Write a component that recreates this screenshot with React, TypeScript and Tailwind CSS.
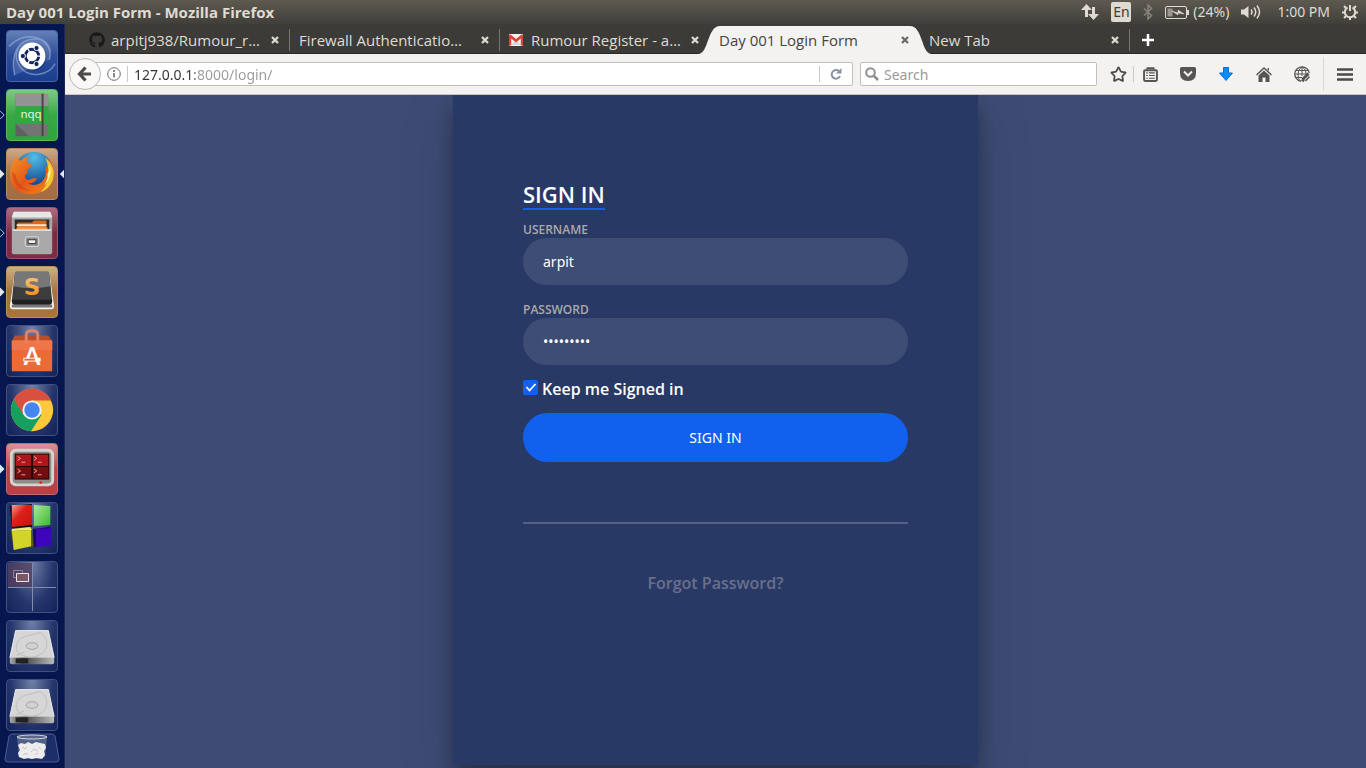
import type { ReactNode } from 'react'
import { FaGithub } from 'react-icons/fa'
import { Star } from 'lucide-react'

type Tab = {
  title: string
  icon?: ReactNode
  active?: boolean
  divider?: boolean
}

const tabs: Tab[] = [
  { title: 'arpitj938/Rumour_r…', icon: <FaGithub className="size-4 text-[#1b1a18]" />, divider: true },
  { title: 'Firewall Authenticatio…', divider: true },
  { title: 'Rumour Register - a…', icon: <GmailIcon /> },
  { title: 'Day 001 Login Form', active: true },
  { title: 'New Tab', divider: true },
]

type LauncherItem = {
  name: string
  tile: string
  icon: ReactNode
  left?: 'hollow' | 'solid'
  focused?: boolean
}

const glass = 'bg-radial-[at_50%_0%] from-[#7280a8] via-[#24366c] via-60% to-[#122358] border-[#40517f]'

const launcher: LauncherItem[] = [
  { name: 'Dash', tile: 'bg-linear-to-b from-[#6480b8] via-[#2c4d99] to-[#1b3f90] border-[#4a66a6]', icon: <DashIcon /> },
  { name: 'Notepadqq', tile: 'bg-linear-to-b from-[#7fc884] via-[#36a944] to-[#2fa53d] border-[#5cb865]', icon: <NotepadIcon />, left: 'hollow' },
  { name: 'Firefox', tile: 'bg-linear-to-b from-[#cfa888] via-[#a8734a] to-[#a56c42] border-[#b98a66]', icon: <FirefoxIcon />, left: 'solid', focused: true },
  { name: 'Files', tile: 'bg-linear-to-b from-[#ac6c80] via-[#7d2b43] to-[#7f2c42] border-[#9c5268]', icon: <FilesIcon />, left: 'hollow' },
  { name: 'Sublime Text', tile: 'bg-linear-to-b from-[#d0ae86] via-[#a3733c] to-[#a8753a] border-[#bb9160]', icon: <SublimeIcon />, left: 'solid' },
  { name: 'Software', tile: glass, icon: <SoftwareIcon /> },
  { name: 'Chrome', tile: glass, icon: <ChromeIcon /> },
  { name: 'Terminator', tile: 'bg-linear-to-b from-[#d99396] via-[#b94347] to-[#b84044] border-[#c66a6e]', icon: <TerminatorIcon />, left: 'solid' },
  { name: 'Code Blocks', tile: glass, icon: <BlocksIcon /> },
  { name: 'Workspaces', tile: glass, icon: <WorkspacesIcon /> },
  { name: 'Disk 1', tile: glass, icon: <DiskIcon /> },
  { name: 'Disk 2', tile: glass, icon: <DiskIcon /> },
]

function GmailIcon() {
  return (
    <svg viewBox="0 0 14 12" className="w-[14px] h-3">
      <rect width="14" height="12" rx="1" fill="#f2f2f2" />
      <path d="M2 11 7 6l5 5z" fill="#d8d8d8" />
      <path d="M0 1v10.500h2.200V4.500L7 8.500l4.800-4v7H14V1L12.500.500 7 5 1.500.500z" fill="#dc4437" />
    </svg>
  )
}

function DashIcon() {
  return (
    <svg viewBox="0 0 52 52" className="size-[50px]">
      <g fill="none" stroke="#a9badd" strokeWidth="1.500" opacity=".55">
        <path d="M8 46C3 24 12 8 30 8c12 0 17 10 14 22" />
        <path d="M2 16C18 0 40 4 45 22" />
        <path d="M50 34C44 46 24 50 14 38 8 30 9 22 12 17" />
      </g>
      <path d="M8 46C3 24 12 8 30 8c12 0 17 10 14 22z" fill="#9eb2dc" opacity=".25" />
      <circle cx="27" cy="27" r="14" fill="#0e225c" opacity=".4" />
      <circle cx="26" cy="26" r="14" fill="#fff" />
      <circle cx="26" cy="26" r="7" fill="none" stroke="#12265f" strokeWidth="3" />
      <g stroke="#fff" strokeWidth="1.300">
        <path d="M31 26h6M23.500 21.700l-3-5.200M23.500 30.300l-3 5.200" />
      </g>
      <g fill="#12265f" stroke="#fff" strokeWidth="1">
        <circle cx="16.500" cy="26" r="2.700" />
        <circle cx="30.700" cy="17.700" r="2.700" />
        <circle cx="30.700" cy="34.300" r="2.700" />
      </g>
    </svg>
  )
}

function NotepadIcon() {
  return (
    <svg viewBox="0 0 52 52" className="size-[50px]">
      <path d="M9 4h30q4 0 4 4v36q0 4-4 4H9z" fill="#747474" />
      <path d="M9 4h30q4 0 4 4v9H9z" fill="#939393" />
      <path d="m9 35 14 13H9z" fill="#5f5f5f" />
      <path d="M9 17h34v18H9z" fill="#2eaa3e" />
      <path d="M36 4h2v44h-2z" fill="#464646" />
      <text x="25" y="29" textAnchor="middle" fontSize="12" fontFamily="Noto Sans, sans-serif" fill="#e4f3e6">nqq</text>
    </svg>
  )
}

function FirefoxIcon() {
  return (
    <svg viewBox="0 0 52 52" className="size-[50px]">
      <defs>
        <radialGradient id="ff-globe" cx=".5" cy=".15" r=".75">
          <stop offset="0" stopColor="#52bde8" />
          <stop offset="1" stopColor="#123f87" />
        </radialGradient>
        <linearGradient id="ff-fox" x1="0" y1="0" x2="1" y2="1">
          <stop offset="0" stopColor="#f59324" />
          <stop offset=".5" stopColor="#e4571b" />
          <stop offset="1" stopColor="#f08a1d" />
        </linearGradient>
      </defs>
      <circle cx="28" cy="23" r="20" fill="url(#ff-globe)" />
      <path d="M7 13c0-2 1-4 3-5 1 3 3 4 5 4 2-3 5-4 8-4-2 3-3 4-2 6 2 1 4 1 5 3-1 3-4 3-5 5 1 2 0 4-2 5-1 3 1 5 4 5 3-1 5-3 8-1-2 4-6 5-9 5 6 3 13 1 16-4 2-3 3-7 2-12 3-4 4-6 3-10 4 5 6 10 5 16-2 13-11 21-23 21C12 47 3 39 3 28c0-6 1-10 4-15z" fill="url(#ff-fox)" />
      <path d="M40 9c7 6 10 13 8 22-2 7-7 12-13 14 4-5 7-8 7-13 2-3 2-6 1-9 0-4-1-9-3-14z" fill="#f6c52c" />
      <path d="M44 16c3 7 1 15-5 22 2-5 4-8 3-12 2-3 2-6 2-10z" fill="#fdf3a0" />
      <path d="M5 23c0 13 8 20 20 21-8-3-15-8-16-17z" fill="#c93b16" opacity=".5" />
    </svg>
  )
}

function FilesIcon() {
  return (
    <svg viewBox="0 0 52 52" className="size-[50px]">
      <path d="M7 4h38l2 4v38q0 2-2 2H7q-2 0-2-2V8z" fill="#a8a8a8" />
      <path d="M7 4h38l2 6H5z" fill="#e7e7e7" />
      <path d="M8 12h36v12H8z" fill="#2b2b2b" />
      <path d="M11 15h15l2-2h13v9H11z" fill="#d8691f" />
      <path d="M10 17h31v2H10z" fill="#f7e8d5" />
      <path d="M10 20h32v3H10z" fill="#f09a4c" />
      <path d="M6 22h40l-1 24H8z" fill="#a9a9a9" />
      <path d="M6 22h40v2H6z" fill="#ddd" />
      <rect x="19" y="30" width="14" height="10" rx="2" fill="#8f8f8f" stroke="#e4e4e4" />
      <rect x="22" y="33" width="8" height="4" fill="#eee" stroke="#333" />
    </svg>
  )
}

function SublimeIcon() {
  return (
    <svg viewBox="0 0 52 52" className="size-[50px]">
      <defs>
        <linearGradient id="sublime-s" x1="0" y1="0" x2="0" y2="1">
          <stop offset="0" stopColor="#f7c987" />
          <stop offset="1" stopColor="#f5860f" />
        </linearGradient>
      </defs>
      <path d="m8 6-5 34q0 4 3 4h40q3 0 3-4L44 6z" fill="#f1f1f1" />
      <path d="M5 39h42v3H5z" fill="#777" />
      <path d="M10 5h32q2 0 2 2l3 28q0 4-3 4H8q-3 0-3-4L8 7q0-2 2-2z" fill="#3c3c3c" />
      <path d="M10 5h32q2 0 2 2l1 13Q24 24 7 20L8 7q0-2 2-2z" fill="#777" />
      <path d="M5 34h42q0 5-3 5H8q-3 0-3-5z" fill="#202020" />
      <text x="26" y="29" textAnchor="middle" fontSize="24" fontWeight="700" fontFamily="DejaVu Sans, sans-serif" fill="url(#sublime-s)">S</text>
    </svg>
  )
}

function SoftwareIcon() {
  return (
    <svg viewBox="0 0 52 52" className="size-[50px]">
      <path d="M5 16 8 10h35l4 6z" fill="#b84f2a" />
      <path d="M5 15h42v32H5z" fill="#ec6a36" />
      <path d="M5 15h42v10H5z" fill="#f0764a" />
      <path d="M20 18V9q0-4 6-4t6 4v9" fill="none" stroke="#e08367" strokeWidth="3" />
      <text x="26" y="41" textAnchor="middle" fontSize="25" fontWeight="700" fontFamily="Lato, sans-serif" fill="#fff">A</text>
      <rect x="17" y="33" width="18" height="4" fill="#fff" />
      <rect x="18" y="34" width="11" height="2" fill="#ec6a36" />
    </svg>
  )
}

function ChromeIcon() {
  return (
    <svg viewBox="0 0 52 52" className="size-[50px]">
      <circle cx="26" cy="26" r="22" fill="#fdc93b" />
      <path d="M26 26 7 15a22 22 0 0 0 18 33l11-17z" fill="#16a05d" />
      <path d="M26 16h20A22 22 0 0 0 7 15l10 16z" fill="#d95040" />
      <circle cx="26" cy="26" r="10" fill="#f4f4f4" />
      <circle cx="26" cy="26" r="8" fill="#4585ee" />
    </svg>
  )
}

function TerminatorIcon() {
  return (
    <svg viewBox="0 0 52 52" className="size-[50px]">
      <rect x="3" y="5" width="46" height="39" rx="6" fill="#d4d2cf" />
      <rect x="6" y="8" width="40" height="33" rx="4" fill="#8f8c87" />
      <rect x="8" y="10" width="36" height="27" fill="#230506" />
      <path d="M9 11h16v12H9zM27 11h16v12H27z" fill="#b0171a" />
      <path d="M9 24h16v12H9zM27 24h16v12H27z" fill="#720e10" />
      <path d="m11 13 3 2-3 2m4 2h4m9-6 3 2-3 2m4 2h4M11 26l3 2-3 2m4 2h4m9-6 3 2-3 2m4 2h4" fill="none" stroke="#f0a3a3" />
      <circle cx="35" cy="40" r="1.500" fill="#e42a20" />
    </svg>
  )
}

function BlocksIcon() {
  return (
    <svg viewBox="0 0 52 52" className="size-[50px]">
      <defs>
        <linearGradient id="block-red" x1="0" y1="0" x2="1" y2="1">
          <stop offset="0" stopColor="#f2a19c" />
          <stop offset=".4" stopColor="#dd2118" />
          <stop offset="1" stopColor="#c3140d" />
        </linearGradient>
        <linearGradient id="block-green" x1="0" y1="0" x2="1" y2="1">
          <stop offset="0" stopColor="#a5ec95" />
          <stop offset="1" stopColor="#3fb62b" />
        </linearGradient>
      </defs>
      <path d="M3 3 26 1v24L5 26z" fill="#140c10" />
      <path d="M5 2h21v21l-21 2z" fill="url(#block-red)" />
      <path d="m28 2 17 1v20l-17 1z" fill="url(#block-green)" />
      <path d="m4 27 3 22 21-4-3-19z" fill="#5b5a0d" />
      <path d="m5 29 20-1v17L7 49z" fill="#d3d42a" />
      <path d="M5 29v-2l19-2 2 3z" fill="#ecec70" />
      <path d="m27 27 18-2v18l-17 3z" fill="#1c0756" />
      <path d="m30 27 16-1v18l-16 2z" fill="#3d05bd" />
    </svg>
  )
}

function WorkspacesIcon() {
  return (
    <svg viewBox="0 0 50 50" className="size-[50px]">
      <path d="M1 1h25v24H1z" fill="#54405f" opacity=".8" />
      <path d="M25.500 1v48M1 25.500h48" stroke="#7f8cae" />
      <path d="M6.500 8.500h9v7h-9z" fill="none" stroke="#8d8495" />
      <path d="M9.500 11.500h12v8h-12z" fill="#7b5765" stroke="#e8e4e7" />
    </svg>
  )
}

function DiskIcon() {
  return (
    <svg viewBox="0 0 52 52" className="size-[50px]">
      <defs>
        <linearGradient id="disk-edge" x1="0" x2="1">
          <stop offset="0" stopColor="#aaa" />
          <stop offset=".3" stopColor="#444" />
          <stop offset="1" stopColor="#bbb" />
        </linearGradient>
      </defs>
      <path d="M9 10h34l6 28H3z" fill="#d6d6d6" stroke="#efefef" />
      <path d="M3 38h46v5q0 2-2 2H5q-2 0-2-2z" fill="url(#disk-edge)" />
      <path d="M9 39h13v5H9z" fill="#222" />
      <path d="M13 34C5 27 12 16 23 15l11-3c7 3 10 14 5 19-4 7-18 9-26 3z" fill="none" stroke="#bcbcbc" />
      <ellipse cx="26" cy="26" rx="6" ry="3.500" fill="#d2d2d2" stroke="#a0a0a0" />
      <path d="m10 36 8-4" stroke="#bbb" />
    </svg>
  )
}

function TrashIcon() {
  return (
    <svg viewBox="0 0 56 30" className="w-14 h-[30px]">
      <path d="M8 1h40q2 0 3 2l4 23q0 3-3 3H4q-3 0-3-3L5 3q1-2 3-2z" fill="#1c2f69" stroke="#4c5d8c" />
      <path d="m13 4 2 20q13 4 26 0l2-20z" fill="#77849f" opacity=".6" />
      <path d="m14 12 3-2 4 1 3-2 4 2 4-2 4 1 5 1 1 4-2 3 1 4-3 4-6-1-4 1-4-1-4 1-5-2-1-4 2-3z" fill="#ececec" />
      <path d="m18 14 3 2 2-2m4 5 3-3 4 2m-15 4 3-2 2 2m7 0 3-2m1-6 2 2" fill="none" stroke="#c1c4c9" />
      <ellipse cx="28" cy="4" rx="15" ry="2" fill="#5d6887" stroke="#d3d6dc" />
    </svg>
  )
}

function Launcher() {
  return (
    <nav aria-label="Launcher" className="w-[65px] shrink-0 flex flex-col items-center gap-[7px] pt-1.5 bg-[#06174f] border-r border-[#1b2a59]">
      {launcher.map((item) => (
        <div key={item.name} className="relative w-full flex justify-center">
          {item.left && (
            <svg viewBox="0 0 6 12" className="absolute left-0 top-5 w-[5px] h-3">
              <path
                d={item.left === 'solid' ? 'm0 1 5 5-5 5z' : 'm0 1 5 5-5 5'}
                fill={item.left === 'solid' ? '#e3e5ea' : 'none'}
                stroke="#e3e5ea"
              />
            </svg>
          )}
          <button
            type="button"
            aria-label={item.name}
            className={`size-[52px] rounded-[4px] border flex items-center justify-center overflow-hidden ${item.tile}`}
          >
            {item.icon}
          </button>
          {item.focused && (
            <svg viewBox="0 0 6 12" className="absolute right-0 top-5 w-[5px] h-3">
              <path d="M6 1 1 6l5 5z" fill="#e3e5ea" />
            </svg>
          )}
        </div>
      ))}
      <button type="button" aria-label="Trash" className="-mt-[5px]">
        <TrashIcon />
      </button>
    </nav>
  )
}

function SystemBar() {
  return (
    <header className="h-6 flex items-center justify-between pl-1.5 pr-2 bg-linear-to-b from-[#5d5a50] to-[#403f3a] text-[#dfdbd2]">
      <h1 className="text-[15px] leading-6 font-bold font-['Open_Sans',sans-serif] whitespace-nowrap">Day 001 Login Form - Mozilla Firefox</h1>
      <div className="flex items-center text-sm whitespace-nowrap">
        <svg viewBox="0 0 18 16" className="w-[18px] h-4 mr-3" fill="#dfdbd2">
          <path d="M5.500 0 0 6h4v7h3V6h4zM12.500 16 7 10h4V3h3v7h4z" />
        </svg>
        <span className="w-5 h-5 mr-3 rounded-[2px] bg-[#dfdbd2] text-[#3f3d39] text-sm leading-5 text-center">En</span>
        <svg viewBox="0 0 10 16" className="w-2.5 h-4 mr-3" fill="none" stroke="#87847b" strokeWidth="1.500">
          <path d="m1 4.500 7.500 7L5 15V1l3.500 3.500-7.500 7" />
        </svg>
        <svg viewBox="0 0 24 13" className="w-6 h-[13px] mr-1" fill="none" stroke="#dfdbd2">
          <rect x=".500" y=".500" width="21" height="12" rx="1.500" />
          <path d="M23 4v5" strokeWidth="2" />
          <path d="M2.500 2.500h5v8h-5z" fill="#99968d" stroke="none" />
          <path d="m7 5 6 2V4l6 4-6-1v2z" fill="#dfdbd2" strokeWidth=".5" />
        </svg>
        <span className="mr-3">(24%)</span>
        <svg viewBox="0 0 20 16" className="w-5 h-4 mr-4" fill="none" stroke="#dfdbd2" strokeWidth="1.500">
          <path d="M0 5.500h3L7.500 2v12L3 10.500H0z" fill="#dfdbd2" stroke="none" />
          <path d="M10 5.500q2 2.500 0 5M13 3.500q3.500 4.500 0 9M16 1.500q5 6.500 0 13" />
        </svg>
        <span className="mr-3">1:00 PM</span>
        <svg viewBox="0 0 16 16" className="size-4" fill="none" stroke="#dfdbd2" strokeWidth="2">
          <path d="M5.500 3.500a5.200 5.200 0 1 0 5 0M8 1v6" />
          <path d="M3.800 3.800 2 2M12.200 3.800 14 2M3 8.500H0M13 8.500h3M4 12l-2 2M12 12l2 2M8 13v3" />
        </svg>
      </div>
    </header>
  )
}

function CloseIcon() {
  return (
    <svg viewBox="0 0 8 8" className="size-2">
      <path d="m1 1 6 6M7 1 1 7" stroke="currentColor" strokeWidth="2.300" />
    </svg>
  )
}

function TabStrip() {
  return (
    <div role="tablist" className="h-[30px] flex items-end pl-[15px] bg-[#3c3b37] shadow-[inset_0_-1px_0_#2b2a27]">
      {tabs.map((tab) => (
        <div
          key={tab.title}
          className={
            tab.active
              ? 'relative w-[210px] h-7 flex items-center pl-[9px] pr-[11px] text-[#46443f]'
              : 'relative w-[210px] h-7 flex items-center pl-[9px] pr-[11px] text-[#dfdbd2]'
          }
        >
          {tab.active && (
            <>
              <svg viewBox="0 0 24 28" className="absolute -left-3 top-0 w-6 h-7">
                <path d="M0 28C11 28 9 0 22 0h2v28z" fill="#f4f2f1" />
              </svg>
              <span className="absolute inset-x-3 inset-y-0 bg-[#f4f2f1]" />
              <svg viewBox="0 0 24 28" className="absolute -right-3 top-0 w-6 h-7">
                <path d="M24 28C13 28 15 0 2 0H0v28z" fill="#f4f2f1" />
              </svg>
            </>
          )}
          {tab.icon && <span className="w-[22px] shrink-0">{tab.icon}</span>}
          <button
            type="button"
            role="tab"
            aria-selected={!!tab.active}
            className="relative flex-1 min-w-0 text-left text-[15px] leading-6 font-['Open_Sans',sans-serif] whitespace-nowrap"
          >
            {tab.title}
          </button>
          <button type="button" aria-label={`Close ${tab.title}`} className={tab.active ? 'relative text-[#6b6963]' : 'relative'}>
            <CloseIcon />
          </button>
          {tab.divider && <span className="absolute right-0 top-[3px] w-px h-[22px] bg-[#75736d]" />}
        </div>
      ))}
      <button type="button" aria-label="Open a new tab" className="h-7 ml-[11px] flex items-center">
        <svg viewBox="0 0 14 14" className="size-[14px]">
          <path d="M7 1v12M1 7h12" stroke="#fff" strokeWidth="2.500" />
        </svg>
      </button>
    </div>
  )
}

function ToolButton({ label, children }: { label: string; children: ReactNode }) {
  return (
    <button type="button" aria-label={label} className="w-[38px] flex justify-center text-[#565553]">
      {children}
    </button>
  )
}

function NavBar() {
  return (
    <div className="h-[41px] flex items-center pl-1 bg-[#f4f2f1] border-b border-[#c8c5c0]">
      <button type="button" aria-label="Back" className="relative z-10 size-8 shrink-0 rounded-full border border-[#bab8b4] bg-[#f9f8f7] flex items-center justify-center">
        <svg viewBox="0 0 16 16" className="size-4">
          <path d="M8.500 1.500 2.500 8l6 6.500M3 8h11" fill="none" stroke="#4a4a48" strokeWidth="3.200" />
        </svg>
      </button>
      <div className="flex-1 h-6 -ml-2 pl-[13px] flex items-center bg-white border border-[#c2bfb9] rounded-r-[2px]">
        <svg viewBox="0 0 14 14" className="size-[14px] shrink-0" fill="none" stroke="#6e6e6c">
          <circle cx="7" cy="7" r="6.300" />
          <path d="M7 6v4.500M7 3v2" strokeWidth="1.600" />
        </svg>
        <span className="w-px h-4 ml-1.5 bg-[#cbc9c5]" />
        <input
          aria-label="Address"
          defaultValue="127.0.0.1:8000/login/"
          className="flex-1 min-w-0 h-6 pt-px ml-1.5 text-sm outline-none bg-linear-[to_right,#333_0,#333_61px,#9a9a9a_61px] bg-clip-text text-transparent"
        />
        <span className="w-px h-4 bg-[#cbc9c5]" />
        <button type="button" aria-label="Reload" className="w-8 flex justify-center">
          <svg viewBox="0 0 12 12" className="size-3">
            <path d="M9 3.200A4.300 4.300 0 1 0 10 8" fill="none" stroke="#8793a3" strokeWidth="2" />
            <path d="M11.500 0v5.500H6z" fill="#8793a3" />
          </svg>
        </button>
      </div>
      <div className="w-[237px] h-6 ml-[7px] pl-1 flex items-center gap-[5px] bg-white border border-[#c2bfb9] rounded-[2px]">
        <svg viewBox="0 0 14 14" className="size-[14px] shrink-0" fill="none" stroke="#8f8f8f">
          <circle cx="5.500" cy="5.500" r="4.300" strokeWidth="2" />
          <path d="m9 9 4 4" strokeWidth="2.600" />
        </svg>
        <input aria-label="Search" placeholder="Search" className="flex-1 min-w-0 h-6 pt-px text-sm outline-none placeholder:text-[#9a9a9a]" />
      </div>
      <button type="button" aria-label="Bookmark this page" className="w-9 ml-[3px] flex justify-center text-[#4c4b49]">
        <Star className="size-[17px]" strokeWidth={2.500} />
      </button>
      <span className="w-px h-4 bg-[#cbc9c5] -ml-[3px] -mr-[3px]" />
      <ToolButton label="Bookmarks">
        <svg viewBox="0 0 14 14" className="size-[15px]" fill="none" stroke="currentColor">
          <rect x="1" y="3" width="12" height="10" rx="1" strokeWidth="1.800" />
          <path d="M4 2.500V1h6v1.500" strokeWidth="1.500" />
          <path d="M3 5.500h1.500M5.500 5.500H11M3 8h1.500M5.500 8H11M3 10.500h1.500M5.500 10.500H11" />
        </svg>
      </ToolButton>
      <ToolButton label="Pocket">
        <svg viewBox="0 0 16 14" className="w-4 h-[14px]">
          <path d="M1.500 0h13Q16 0 16 1.500V6q0 8-8 8T0 6V1.500Q0 0 1.500 0z" fill="currentColor" />
          <path d="m4 4.500 4 4 4-4" fill="none" stroke="#f4f2f1" strokeWidth="2" />
        </svg>
      </ToolButton>
      <ToolButton label="Downloads">
        <svg viewBox="0 0 14 14" className="size-[14px]">
          <path d="M4.500.500h5V6h4L7 13.500.500 6h4z" fill="#0a8cff" stroke="#0670d8" />
        </svg>
      </ToolButton>
      <ToolButton label="Home">
        <svg viewBox="0 0 16 15" className="w-4 h-[15px]" fill="currentColor">
          <path d="m8 0 8 7.500-1 1-7-6.500-7 6.500-1-1z" />
          <path d="m8 3.500 5.500 5V15H9.500v-4.500h-3V15h-4V8.500zM11.500 1H13v3l-1.500-1.500z" />
        </svg>
      </ToolButton>
      <ToolButton label="Web tools">
        <svg viewBox="0 0 16 16" className="size-4" fill="none" stroke="currentColor">
          <path d="M15.300 7A7.300 7.300 0 1 0 7 15.300" strokeWidth="1.300" />
          <path d="M8 .700C3 4 3 12 6.500 15M8 .700C11 3 12 5 12 8M8 1v9M1 8h11M2 4.500h12M2 11.500h6" />
          <path d="m14.500 7.500-6 6M8.500 15.500l1-2.500" strokeWidth="3" />
          <path d="m15.500 10.500-4 4.500" strokeWidth="1.500" />
        </svg>
      </ToolButton>
      <span className="w-px h-[34px] bg-[#dad8d4] ml-0.5" />
      <button type="button" aria-label="Open menu" className="w-[42px] flex justify-center">
        <svg viewBox="0 0 16 13" className="w-4 h-[13px]">
          <path d="M0 1.500h16M0 6.500h16M0 11.500h16" stroke="#4c4b49" strokeWidth="2.600" />
        </svg>
      </button>
    </div>
  )
}

function Field({ id, label, type, value }: { id: string; label: string; type: string; value: string }) {
  return (
    <div className="mb-[15px]">
      <label htmlFor={id} className="block h-[18px] text-xs leading-5 text-[#aaa]">{label}</label>
      <input
        id={id}
        type={type}
        defaultValue={value}
        className="block w-full h-[47px] px-5 rounded-[25px] bg-white/10 text-white text-sm font-normal font-['Noto_Sans',sans-serif] outline-none"
      />
    </div>
  )
}

function LoginForm() {
  return (
    <form className="w-full max-w-[525px] min-h-[670px] mx-auto px-[70px] pt-[90px] pb-[50px] bg-[#293965] shadow-[0_12px_15px_0_rgba(0,0,0,.24),0_17px_50px_0_rgba(0,0,0,.19)] text-base leading-[18px] font-semibold font-['Open_Sans',sans-serif] text-white">
      <h2 className="w-fit mb-2.5 pb-[5px] border-b-2 border-[#1161ee] text-[22px] leading-[18px]">SIGN IN</h2>
      <Field id="username" label="USERNAME" type="text" value="arpit" />
      <Field id="password" label="PASSWORD" type="password" value="arpit1234" />
      <div className="relative flex mb-[15px]">
        <input id="keep" type="checkbox" defaultChecked className="peer appearance-none size-[15px] mr-1 rounded-[2px] bg-white/10 checked:bg-[#1161ee]" />
        <svg viewBox="0 0 15 15" className="absolute left-0 top-0 size-[15px] pointer-events-none opacity-0 peer-checked:opacity-100">
          <path d="m3.500 7 3 3.500 6-6.500" fill="none" stroke="#fff" strokeWidth="1.800" />
        </svg>
        <label htmlFor="keep">Keep me Signed in</label>
      </div>
      <button type="submit" className="block w-full h-[49px] rounded-[25px] bg-[#1161ee] text-sm font-normal font-['Noto_Sans',sans-serif]">
        SIGN IN
      </button>
      <hr className="h-0.5 border-0 mt-[60px] mb-[50px] bg-white/20" />
      <div className="text-center">
        <a href="#forgot" className="text-[#6a6f8c]">Forgot Password?</a>
      </div>
    </form>
  )
}

export default function App() {
  return (
    <div className="min-h-screen flex flex-col font-['Noto_Sans',sans-serif]">
      <SystemBar />
      <div className="flex-1 flex">
        <Launcher />
        <div className="flex-1 min-w-0 flex flex-col">
          <TabStrip />
          <NavBar />
          <main className="flex-1 overflow-hidden bg-[#3e4c75]">
            <LoginForm />
          </main>
        </div>
      </div>
    </div>
  )
}
